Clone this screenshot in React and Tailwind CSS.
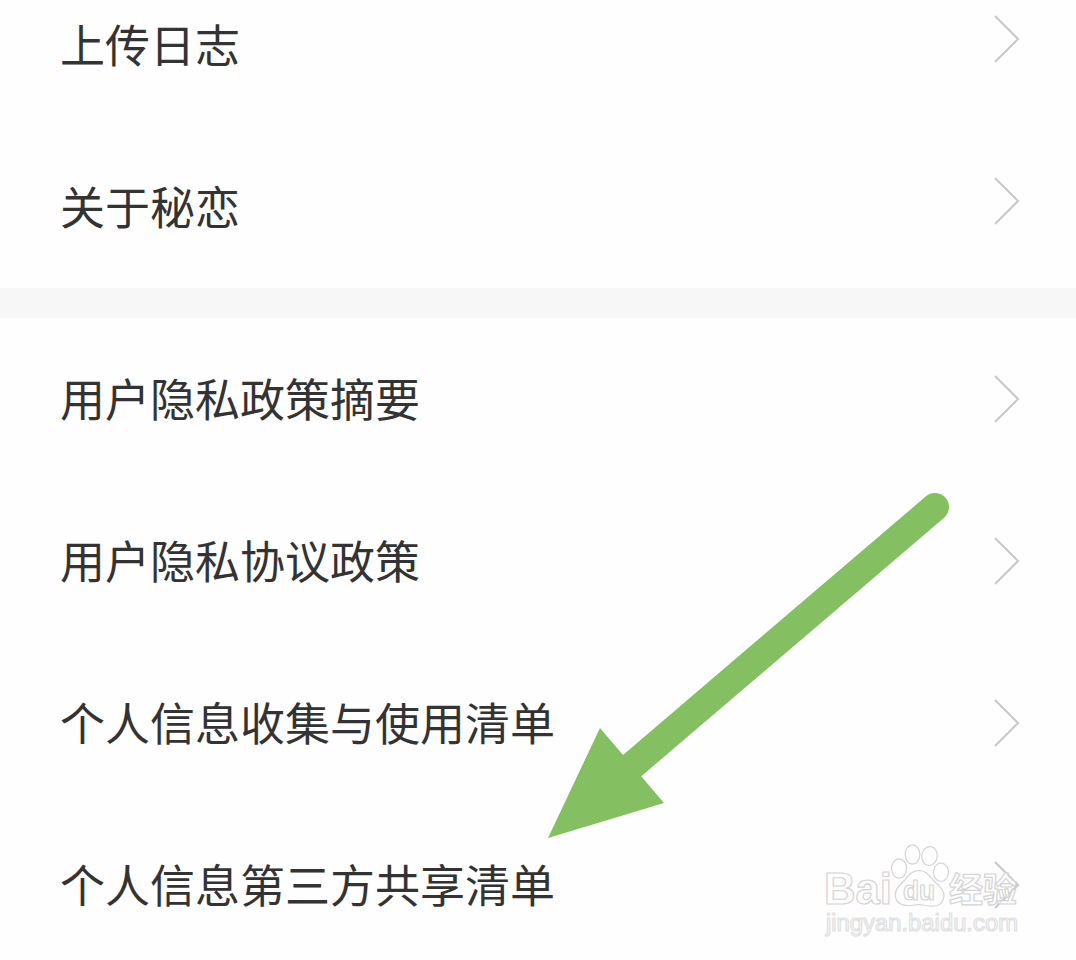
const GENERAL = ['上传日志', '关于秘恋']
const PRIVACY = ['用户隐私政策摘要', '用户隐私协议政策', '个人信息收集与使用清单', '个人信息第三方共享清单']

function Row({ label, textPad }) {
  return (
    <div className="flex h-[162px] shrink-0 items-center justify-between pl-[60px] pr-[55px]">
      <span className={`whitespace-nowrap text-[45px] leading-[60px] text-[#333333] ${textPad}`}>{label}</span>
      <svg className="h-[50px] w-[28px]" viewBox="0 0 28 50" fill="none" stroke="#c8c8c8" strokeWidth="2">
        <path d="M2 2 L25 25 L2 48" />
      </svg>
    </div>
  )
}

function Arrow() {
  return (
    <svg className="absolute left-[540px] top-[480px]" width="420" height="370" viewBox="540 480 420 370">
      <path d="M935 507 L620 776" stroke="#84bf62" strokeWidth="28" strokeLinecap="round" />
      <path d="M548 838 L600 728 L664 803 Z" fill="#84bf62" />
    </svg>
  )
}

function Watermark() {
  return (
    <svg className="absolute left-[816px] top-[835px]" width="220" height="115" viewBox="0 0 220 115"
      fill="#ffffff" fillOpacity="0.6" stroke="#d4d4d4" strokeWidth="1.2" strokeLinejoin="round">
      <text x="8" y="69" fontSize="44" fontWeight="700" fontFamily="'Liberation Sans', sans-serif" textLength="68" lengthAdjust="spacingAndGlyphs">Bai</text>
      {/* paw */}
      <ellipse cx="83" cy="33.5" rx="7.5" ry="9.7" />
      <ellipse cx="96.5" cy="19.5" rx="7.3" ry="9.7" />
      <ellipse cx="113.5" cy="21" rx="7.7" ry="9.5" transform="rotate(8 113.5 21)" />
      <ellipse cx="125" cy="37.3" rx="7.5" ry="9.2" />
      <path d="M103 35.5 C93 36 91 44 85 49 C79 54 78.5 59 80 64 C82 71 91 71.5 102 69.5 C110 70 121 74 126 67 C131 59 126 53 120 48 C114 43 112 35.5 103 35.5 Z" />
      <text x="87" y="65" fontSize="27" fontWeight="600" fontFamily="'Liberation Sans', sans-serif" textLength="32" lengthAdjust="spacingAndGlyphs">du</text>
      <text x="133" y="67" fontSize="34" fontWeight="700" fontFamily="'Noto Sans CJK SC', sans-serif">经验</text>
      <text x="10" y="96" fontSize="23" fontFamily="'Liberation Sans', sans-serif" stroke="#e0e0e0" textLength="192" lengthAdjust="spacingAndGlyphs">jingyan.baidu.com</text>
    </svg>
  )
}

export default function App() {
  return (
    <div className="relative h-[960px] w-[1076px] overflow-hidden bg-[#fefefe] font-['Noto_Sans_CJK_SC',sans-serif]">
      <div className="flex flex-col">
        {/* the list is scrolled, its first row is cut by the top edge */}
        <section className="-mt-[42px] flex flex-col pb-[6px]">
          {GENERAL.map(label => <Row key={label} label={label} textPad="pt-[10px]" />)}
        </section>
        <div className="h-[30px] shrink-0 bg-[#f7f7f7]"></div>
        <section className="flex flex-col">
          {PRIVACY.map(label => <Row key={label} label={label} textPad="pb-[2px]" />)}
        </section>
      </div>
      <Arrow />
      <Watermark />
    </div>
  )
}
